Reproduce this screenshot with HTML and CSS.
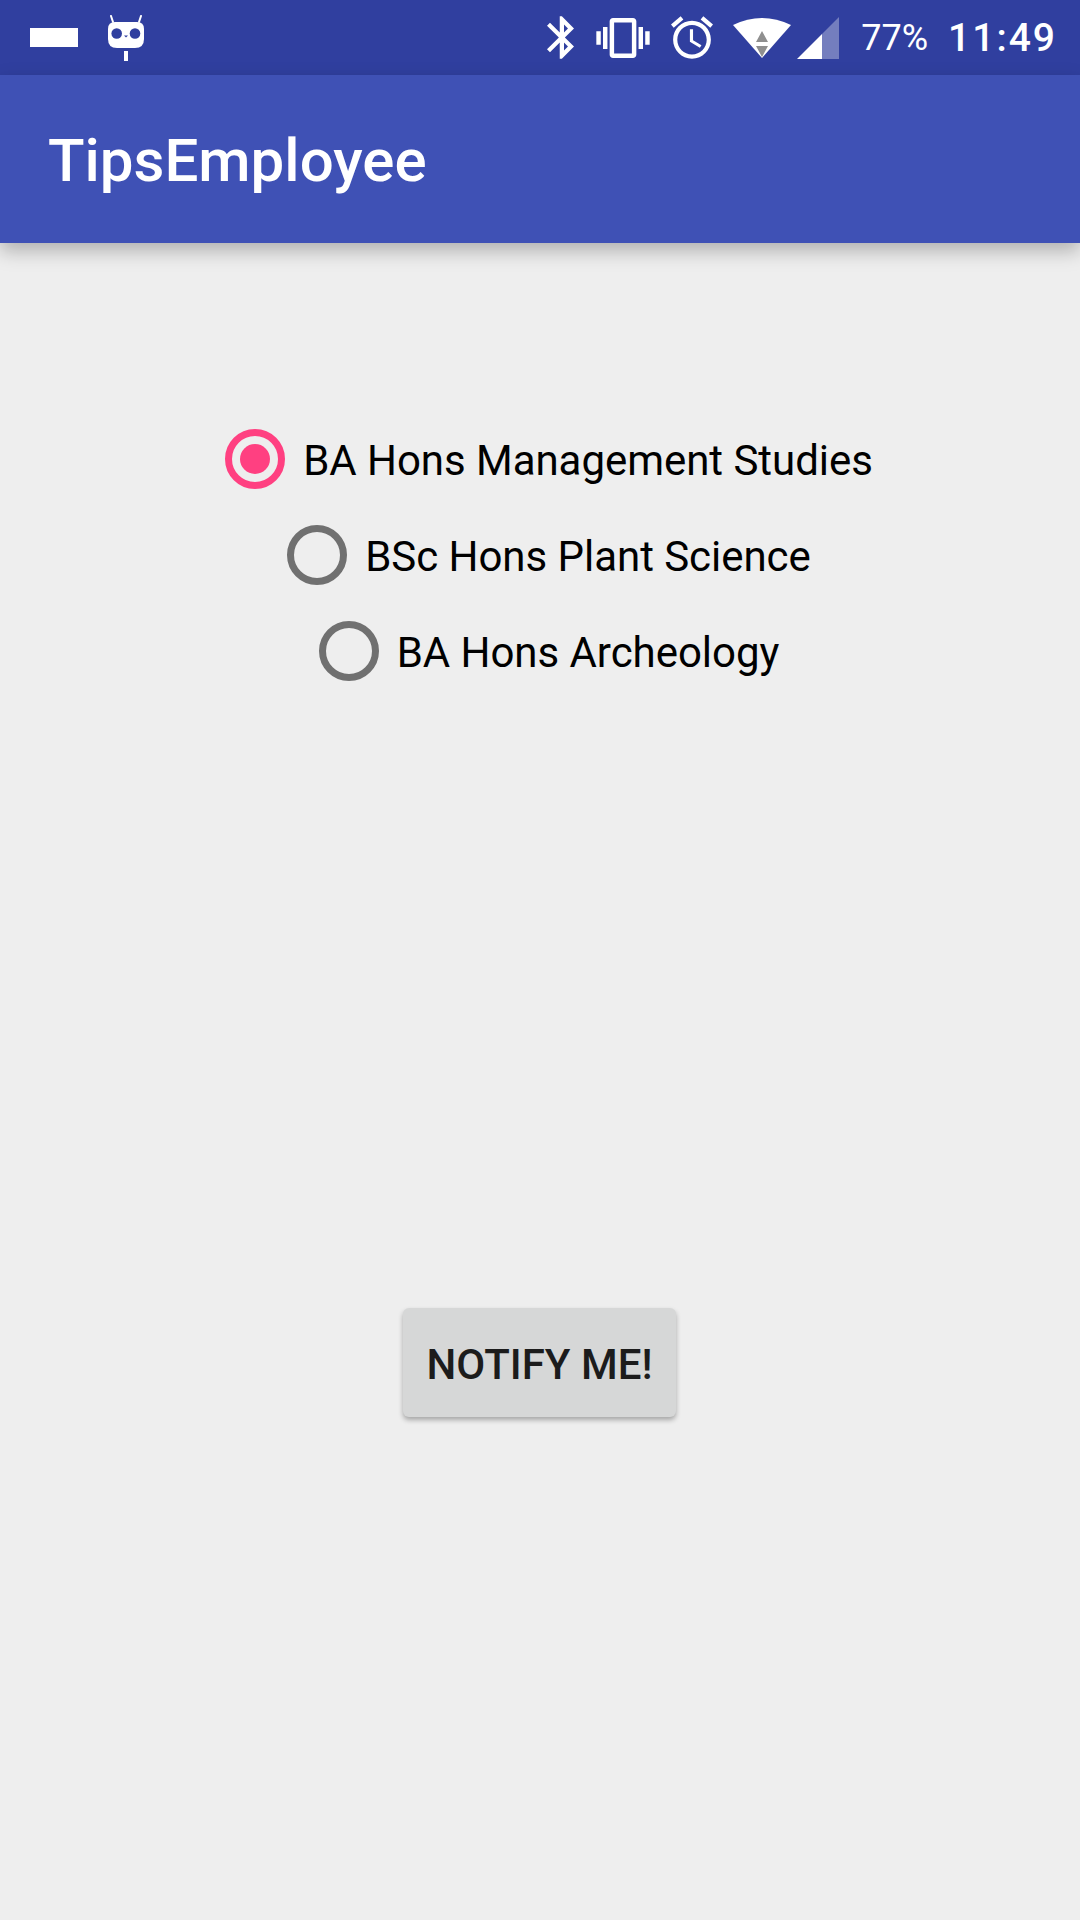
FILE: index.html
```html
<!DOCTYPE html>
<html lang="en">
<head>
    <meta charset="UTF-8">
    <title>TipsEmployee</title>
    <link rel="stylesheet" href="styles.css">
</head>
<body>
    <div class="status-bar">
        <svg class="icon-sim" viewBox="0 0 48 19"><rect width="48" height="19" fill="#fff"/></svg>
        <svg class="icon-cid" viewBox="0 0 36 46">
            <path d="M5 7 L3 1 M31 7 L33 1" stroke="#fff" stroke-width="2" stroke-linecap="round" fill="none"/>
            <path fill="#fff" d="M7 7 H29 Q36 7 36 14 V24 Q36 33 27 33 H9 Q0 33 0 24 V14 Q0 7 7 7 Z"/>
            <circle cx="8.700" cy="18.500" r="5.300" fill="#303f9f"/>
            <circle cx="27" cy="18.500" r="5.300" fill="#303f9f"/>
            <path fill="#303f9f" d="M16 20.500 H20 L18 22.500 Z"/>
            <rect x="16" y="36" width="4" height="10" fill="#fff"/>
        </svg>

        <div class="status-right">
            <svg class="icon-bluetooth" viewBox="5 2 12.71 20"><path fill="#fff" d="M17.71 7.71L12 2h-1v7.59L6.41 5 5 6.41 10.59 12 5 17.59 6.41 19 11 14.41V22h1l5.71-5.71-4.3-4.29 4.3-4.29zM13 5.830l1.880 1.880L13 9.590V5.830zm1.880 10.460L13 18.170v-3.760l1.880 1.880z"/></svg>
            <svg class="icon-vibrate" viewBox="0 3 24 18"><path fill="#fff" d="M0 15h2V9H0v6zm3 2h2V7H3v10zm19-8v6h2V9h-2zm-3 8h2V7h-2v10zM16.500 3h-9C6.670 3 6 3.670 6 4.500v15c0 .83.67 1.500 1.500 1.500h9c.83 0 1.500-.67 1.500-1.500v-15c0-.83-.67-1.500-1.500-1.500zM16 19H8V5h8v14z"/></svg>
            <svg class="icon-alarm" viewBox="2 1.860 20 20.140"><path fill="#fff" d="M22 5.720l-4.600-3.860-1.290 1.530 4.600 3.860L22 5.720zM7.880 3.390L6.600 1.860 2 5.710l1.290 1.530 4.590-3.850zM12.500 8H11v6l4.750 2.850.75-1.230-4-2.370V8zM12 4c-4.970 0-9 4.030-9 9s4.030 9 9 9 9-4.030 9-9-4.030-9-9-9zm0 16c-3.870 0-7-3.130-7-7s3.130-7 7-7 7 3.130 7 7-3.130 7-7 7z"/></svg>
            <svg class="icon-wifi" viewBox="0 0 58 40">
                <path fill="#fff" d="M0 7 Q29 -7 58 7 L29 40 Z"/>
                <path fill="#8f8f8f" d="M29 13 L35 24 H23 Z M23 28 H35 L29 39 Z"/>
            </svg>
            <svg class="icon-signal" viewBox="0 0 42 42">
                <path fill="#fff" d="M0 42 L25 17 V42 Z"/>
                <path fill="#fff" fill-opacity="0.33" d="M25 17 L42 0 V42 H25 Z"/>
            </svg>
            <span class="battery">77%</span>
            <span class="clock">11:49</span>
        </div>
    </div>

    <header class="app-bar">
        <h1>TipsEmployee</h1>
    </header>

    <main>
        <div class="radio-group">
            <label class="radio-row">
                <span class="radio checked"></span>
                <span class="radio-label">BA Hons Management Studies</span>
            </label>
            <label class="radio-row">
                <span class="radio"></span>
                <span class="radio-label">BSc Hons Plant Science</span>
            </label>
            <label class="radio-row">
                <span class="radio"></span>
                <span class="radio-label">BA Hons Archeology</span>
            </label>
        </div>

        <button class="notify">NOTIFY ME!</button>
    </main>
</body>
</html>
```

FILE: styles.css
```css
* {
    box-sizing: border-box;
    margin: 0;
    padding: 0;
}

body {
    background-color: #eeeeee;
    font-family: Roboto, sans-serif;
    height: 1920px;
    overflow: hidden;
    width: 1080px;
}

.status-bar {
    align-items: center;
    background-color: #303f9f;
    color: #fff;
    display: flex;
    height: 75px;
    padding: 0 23px 0 30px;
}

.status-bar svg {
    display: block;
    flex-shrink: 0;
}

.icon-sim {
    height: 19px;
    width: 48px;
}

.icon-cid {
    height: 46px;
    margin-left: 30px;
    width: 36px;
}

.status-right {
    align-items: center;
    display: flex;
    margin-left: auto;
}

.icon-bluetooth {
    height: 43px;
    width: 27px;
}

.icon-vibrate {
    height: 40px;
    margin-left: 22px;
    width: 54px;
}

.icon-alarm {
    height: 43px;
    margin-left: 21px;
    width: 42px;
}

.icon-wifi {
    height: 40px;
    margin-left: 20px;
    width: 58px;
}

.icon-signal {
    height: 42px;
    margin-left: 6px;
    width: 42px;
}

.battery {
    font-size: 36px;
    margin-left: 22px;
}

.clock {
    font-size: 39px;
    font-weight: 500;
    letter-spacing: 2px;
    margin-left: 20px;
}

.app-bar {
    align-items: center;
    background-color: #3f51b5;
    box-shadow: 0 8px 18px rgba(0, 0, 0, 0.26);
    display: flex;
    height: 168px;
    padding: 2px 0 0 48px;
    position: relative;
}

.app-bar h1 {
    color: #fff;
    font-size: 60px;
    font-weight: 500;
}

main {
    align-items: center;
    display: flex;
    flex-direction: column;
    padding-top: 168px;
}

.radio-group {
    align-items: center;
    display: flex;
    flex-direction: column;
    padding-left: 18px;
}

.radio-row {
    align-items: center;
    display: flex;
    height: 96px;
}

.radio {
    align-items: center;
    border: 7px solid #707070;
    border-radius: 50%;
    display: flex;
    height: 60px;
    justify-content: center;
    width: 60px;
}

.radio.checked {
    border-color: #ff4081;
}

.radio.checked::after {
    background-color: #ff4081;
    border-radius: 50%;
    content: "";
    height: 30px;
    width: 30px;
}

.radio-label {
    color: #000;
    font-size: 42px;
    letter-spacing: -0.04px;
    margin-left: 18px;
    padding-top: 2px;
}

.notify {
    background-color: #d6d7d7;
    border: none;
    border-radius: 6px;
    box-shadow: 0 3px 5px rgba(0, 0, 0, 0.3);
    color: #1c1c1c;
    font-family: Roboto, sans-serif;
    font-size: 42px;
    font-weight: 500;
    height: 109px;
    margin: 609px 1px 0 0;
    padding-top: 3px;
    width: 273px;
}
```
